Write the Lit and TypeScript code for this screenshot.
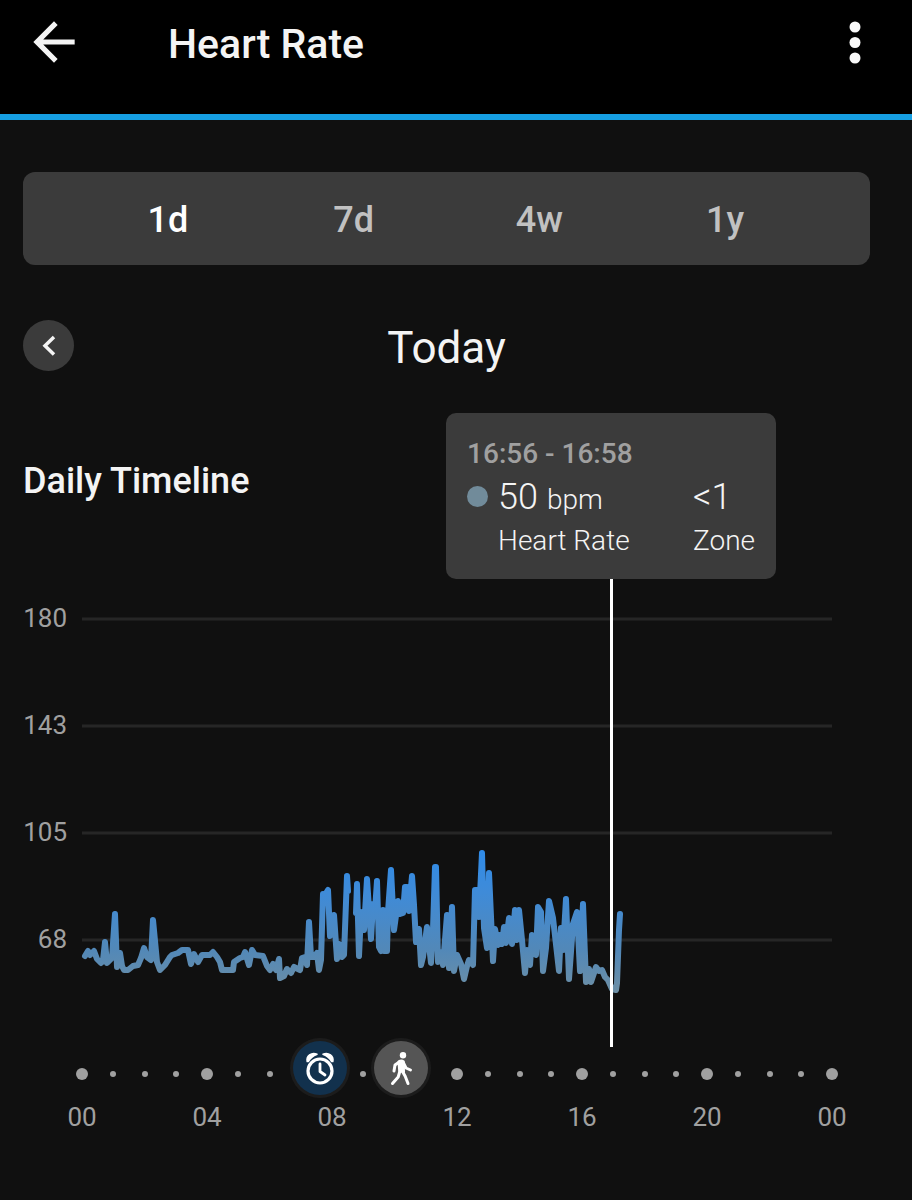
import { LitElement, html, svg, css } from "lit";
import { customElement, state } from "lit/decorators.js";

const RANGES = ["1d", "7d", "4w", "1y"];
const LEVELS = [
  { label: "180", y: 619 },
  { label: "143", y: 726 },
  { label: "105", y: 833 },
  { label: "68", y: 940 },
];
const HOURS = Array.from({ length: 25 }, (_, hour) => hour);

/** Recorded stretches; the pause between them is time without a reading. */
const TRACES = [
  `85,956 88,951 90,955 94,951 97,959 101,963 103,960 105,942 107,963 110,960 112,958 115,914 117,967
   120,953 122,966 124,970 128,970 133,966 138,965 141,958 144,948 147,957 151,960 153,920 157,962
   160,970 165,965 170,957 172,955 178,953 182,950 188,950 191,964 194,954 198,962 202,955 210,955
   213,952 217,957 220,962 222,970 233,970 234,962 237,960 240,958 243,957 245,952 249,965 252,950
   255,955 263,956 267,966 270,970 273,964 276,970 279,959 280,978 284,976 287,969 291,973 294,967
   300,970 302,958 305,957 307,965 309,922 311,957 314,957 317,953 319,970 321,960 323,894 325,895
   328,890 330,936 334,915 337,959 339,944 342,957 344,955 347,876 348,891`,
  `356,913 357,884 359,956 361,912 364,930 367,879 371,939 373,904 375,911 377,881 379,947 381,951
   383,910 384,951 387,951 388,912 391,870 394,930 398,901 400,914 403,913 405,887 407,887 409,911
   412,876 414,905 416,942 419,929 421,965 423,957 427,927 431,963 433,930 435,867 436,867 438,962
   441,952 443,965 447,915 449,968 452,907 454,971 457,955 461,964 464,979 467,966 469,960 473,965
   475,890 477,890 479,917 482,853 484,928 487,948 489,873 493,961 495,929 498,945 500,935 502,944
   504,927 506,943 509,918 512,944 515,910 517,940 519,910 522,940 525,973 527,950 530,965 532,935
   536,955 538,907 541,912 543,971 546,948 549,901 553,918 559,971 561,928 563,950 566,899 569,979
   573,924 577,912 580,971 583,904 586,982 589,969 591,982 596,967 599,971 602,970 605,977 608,980
   612,989 616,990 617,983 619,930 620,914`,
];

const EVENTS = [
  {
    label: "Alarm",
    hour: 7.63,
    kind: "alarm",
    icon: svg`<circle cx="27" cy="30" r="12" fill="none" stroke="#fff" stroke-width="3.2"/>
      <path d="M27 23v7.5l5 3.5" fill="none" stroke="#fff" stroke-width="2.8" stroke-linecap="round" stroke-linejoin="round"/>
      <path d="M14.200 20.500C13 15 18.500 10.800 24 13.200 20.500 14.600 17 17.200 15.400 20.400ZM39.800 20.500C41 15 35.500 10.800 30 13.200 33.500 14.600 37 17.200 38.600 20.400Z" fill="#fff" stroke="#fff" stroke-width="1.600" stroke-linejoin="round"/>`,
  },
  {
    label: "Walk",
    hour: 10.2,
    kind: "walk",
    icon: svg`<circle cx="29" cy="14.200" r="3.200" fill="#fff"/>
      <path d="M24.500 20.500Q27.500 18.500 29.800 20.500L30 31 25.200 30Z" fill="#fff" stroke="#fff" stroke-width="2" stroke-linejoin="round"/>
      <path d="M26 20.500 21 24l-1 6M29.500 22l2.500 5 4.500 2M25.800 30.500 24.200 36l-5.700 6.500M28.500 30.500l2.700 4.700 2.800 7.300" fill="none" stroke="#fff" stroke-width="3" stroke-linecap="round" stroke-linejoin="round"/>`,
  },
];

@customElement("app-root")
export class AppRoot extends LitElement {
  @state() private range = "1d";

  static styles = css`
    :host {
      display: flex;
      flex-direction: column;
      min-height: 100vh;
      box-sizing: border-box;
      background: #101010;
      color: #f4f4f4;
      font-family: Roboto, "Liberation Sans", sans-serif;
    }
    button {
      display: flex;
      align-items: center;
      justify-content: center;
      border: 0;
      padding: 0;
      background: none;
      color: inherit;
      font: inherit;
      cursor: pointer;
    }
    svg {
      display: block;
    }
    .bar {
      display: flex;
      align-items: center;
      padding: 11px 26px 41px 23px;
      background: #000;
      border-bottom: 6px solid #169fe2;
    }
    .title {
      flex: 1;
      margin: 0 0 0 83px;
      padding-top: 4px;
      font-size: 41px;
      font-weight: 500;
      line-height: 48px;
    }
    main {
      padding: 52px 42px 24px 23px;
    }
    .ranges {
      display: grid;
      grid-template-columns: repeat(4, 1fr);
      padding: 0 52px;
      border-radius: 12px;
      background: #3b3b3b;
    }
    .range {
      height: 93px;
      padding-top: 2px;
      font-size: 36px;
      font-weight: 500;
      color: #c1c1c1;
    }
    .range.on {
      color: #fff;
    }
    .day {
      display: grid;
      grid-template-columns: 51px 1fr 51px;
      align-items: center;
      margin-top: 55px;
    }
    .prev {
      width: 51px;
      height: 51px;
      border-radius: 50%;
      background: #3b3b3b;
    }
    .today {
      margin: 0;
      padding-top: 5px;
      font-size: 44px;
      font-weight: 400;
      line-height: 46px;
      text-align: center;
    }
    .heading {
      margin: 90px 0 78px;
      font-size: 36px;
      font-weight: 500;
      line-height: 40px;
    }
    .chart {
      display: grid;
      grid-template-columns: 44px 1fr;
      column-gap: 15px;
      padding-right: 38px;
      color: #a0a0a0;
      font-size: 26px;
      line-height: 32px;
    }
    .levels {
      display: flex;
      flex-direction: column;
      gap: 75px;
      padding-top: 23px;
      text-align: right;
    }
    .plot {
      position: relative;
    }
    .graph {
      width: 100%;
      height: 468px;
      overflow: visible;
    }
    .tip {
      position: absolute;
      bottom: 100%;
      transform: translateX(-50%);
      box-sizing: border-box;
      display: grid;
      grid-template-columns: 31px auto auto;
      width: 330px;
      padding: 24px 21px 21px;
      border-radius: 10px;
      background: #3b3b3b;
      color: #f4f4f4;
      font-size: 28px;
      font-weight: 300;
      white-space: nowrap;
    }
    .time {
      grid-column: 1 / -1;
      color: #a0a0a0;
      font-weight: 500;
      line-height: 34px;
    }
    .swatch {
      width: 21px;
      height: 21px;
      margin-top: 15px;
      border-radius: 50%;
      background: #718b9a;
    }
    .reading {
      display: flex;
      flex-direction: column;
    }
    .zone {
      justify-self: end;
    }
    .value {
      display: flex;
      align-items: baseline;
      gap: 9px;
      height: 53px;
      line-height: 53px;
    }
    .big {
      font-size: 36px;
    }
    .name {
      line-height: 34px;
    }
    .track {
      position: relative;
      grid-column: 2;
      display: flex;
      align-items: center;
      justify-content: space-between;
      height: 54px;
    }
    .tick {
      display: flex;
      justify-content: center;
      width: 0;
    }
    .dot {
      flex: none;
      width: 6px;
      height: 6px;
      border-radius: 50%;
      background: #a0a0a0;
    }
    .dot.major {
      width: 12px;
      height: 12px;
    }
    .event {
      position: absolute;
      bottom: 6px;
      width: 54px;
      height: 54px;
      border-radius: 50%;
      box-shadow: 0 0 0 3px #1c1c1c;
      transform: translateX(-50%);
    }
    .alarm {
      background: #12314d;
    }
    .walk {
      background: #555;
    }
    .hours {
      grid-column: 2;
      display: flex;
      justify-content: space-between;
    }
  `;

  render() {
    return html`
      <header class="bar">
        <button aria-label="Back">
          <svg width="62" height="62" viewBox="0 0 24 24" fill="#f4f4f4">
            <path d="M20 11H7.830l5.590-5.590L12 4l-8 8 8 8 1.410-1.410L7.830 13H20v-2z" />
          </svg>
        </button>
        <h1 class="title">Heart Rate</h1>
        <button aria-label="More options">
          <svg width="62" height="62" viewBox="0 0 62 62" fill="#f8f8f8">
            <circle cx="31" cy="16" r="5.500" />
            <circle cx="31" cy="31.500" r="5.500" />
            <circle cx="31" cy="47" r="5.500" />
          </svg>
        </button>
      </header>
      <main>
        <nav class="ranges" aria-label="Range">
          ${RANGES.map(
            (r) => html`<button
              class="range ${r === this.range ? "on" : ""}"
              aria-pressed=${r === this.range}
              @click=${() => (this.range = r)}
            >${r}</button>`
          )}
        </nav>
        <div class="day">
          <button class="prev" aria-label="Previous day">
            <svg width="51" height="51" viewBox="0 0 51 51" fill="none" stroke="#f4f4f4" stroke-width="3.500">
              <path d="M31 17l-9 8.800L31 34.600" />
            </svg>
          </button>
          <h2 class="today">Today</h2>
        </div>
        <h3 class="heading">Daily Timeline</h3>
        <section class="chart">
          <div class="levels">${LEVELS.map((l) => html`<span>${l.label}</span>`)}</div>
          <div class="plot">
            <svg class="graph" viewBox="82 579 750 468" preserveAspectRatio="none" aria-hidden="true">
              <defs>
                <linearGradient id="heat" gradientUnits="userSpaceOnUse" x1="0" y1="850" x2="0" y2="992">
                  <stop offset="0" stop-color="#2f8be8" />
                  <stop offset="0.300" stop-color="#3f8bd8" />
                  <stop offset="0.700" stop-color="#5288b8" />
                  <stop offset="1" stop-color="#6d8fa5" />
                </linearGradient>
              </defs>
              ${LEVELS.map(
                (l) => svg`<line x1="82" x2="832" y1=${l.y} y2=${l.y} stroke="#262626" stroke-width="3" />`
              )}
              ${TRACES.map(
                (points) => svg`<polyline points=${points} fill="none" stroke="url(#heat)" stroke-width="6"
                  stroke-linecap="round" stroke-linejoin="round" vector-effect="non-scaling-stroke" />`
              )}
              <line x1="611.500" x2="611.500" y1="579" y2="1047" stroke="#fff" stroke-width="3" />
            </svg>
            <div class="tip" style="left: ${(16.93 / 24) * 100}%">
              <span class="time">16:56 - 16:58</span>
              <span class="swatch"></span>
              <span class="reading">
                <span class="value"><span class="big">50</span><span>bpm</span></span>
                <span class="name">Heart Rate</span>
              </span>
              <span class="reading zone">
                <span class="value big">&lt;1</span>
                <span class="name">Zone</span>
              </span>
            </div>
          </div>
          <div class="track">
            ${HOURS.map(
              (h) => html`<span class="tick"><span class="dot ${h % 4 ? "" : "major"}"></span></span>`
            )}
            ${EVENTS.map(
              (e) => html`<button
                class="event ${e.kind}"
                aria-label=${e.label}
                style="left: ${(e.hour / 24) * 100}%"
              ><svg width="54" height="54" viewBox="0 0 54 54">${e.icon}</svg></button>`
            )}
          </div>
          <div class="hours">
            ${HOURS.filter((h) => h % 4 === 0).map(
              (h) => html`<span class="tick">${String(h % 24).padStart(2, "0")}</span>`
            )}
          </div>
        </section>
      </main>
    `;
  }
}
